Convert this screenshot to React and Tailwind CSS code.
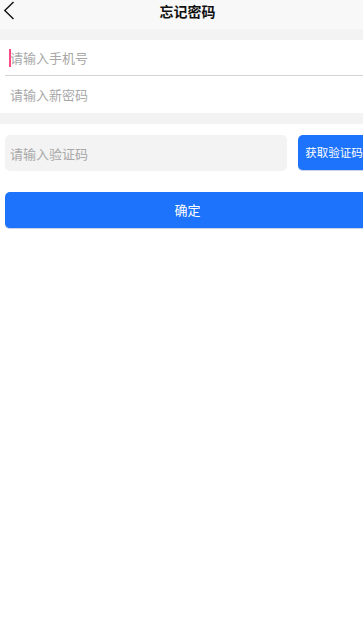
import { useState } from "react";

const App = () => {
    const [phone, setPhone] = useState("");
    const [password, setPassword] = useState("");
    const [code, setCode] = useState("");

    return (
        <div
            className="min-h-screen bg-white overflow-hidden"
            style={{ fontFamily: '"Noto Sans CJK SC", "Noto Sans", sans-serif' }}
        >
            <div className="w-[375px]">
                {/* header */}
                <div className="h-[29px] bg-[#f8f8f8] relative flex justify-center pt-[2px]">
                    <button className="absolute left-[3px] top-[1px] w-[12px] h-[19px]">
                        <svg width="12" height="19" viewBox="0 0 12 19" fill="none">
                            <path d="M10.5 1 L1.8 9.5 L10.5 18" stroke="#111" strokeWidth="1.4" />
                        </svg>
                    </button>
                    <h1 className="text-[14px] font-bold text-[#111] leading-[18px]">忘记密码</h1>
                </div>

                <div className="h-[11px] bg-[#f3f3f3]"></div>

                <div className="bg-white">
                    <div className="h-[36px] ml-[5px] border-b border-[#d4d4d4] relative">
                        <span className="absolute left-[4px] top-[9px] w-[2px] h-[18px] bg-[#ff4a86]"></span>
                        <input
                            value={phone}
                            onChange={(e) => setPhone(e.target.value)}
                            placeholder="请输入手机号"
                            className="w-full h-full px-[5px] text-[13px] outline-none placeholder:text-[#a8a8a8] bg-transparent"
                        />
                    </div>
                    <div className="h-[37px] ml-[5px]">
                        <input
                            type="password"
                            value={password}
                            onChange={(e) => setPassword(e.target.value)}
                            placeholder="请输入新密码"
                            className="w-full h-full px-[5px] text-[13px] outline-none placeholder:text-[#a8a8a8] bg-transparent"
                        />
                    </div>
                </div>

                <div className="h-[11px] bg-[#f3f3f3]"></div>

                <div className="flex items-center gap-[11px] px-[5px] pt-[11px]">
                    <input
                        value={code}
                        onChange={(e) => setCode(e.target.value)}
                        placeholder="请输入验证码"
                        className="w-[282px] h-[36px] rounded-[5px] bg-[#f3f3f3] px-[5px] text-[13px] outline-none placeholder:text-[#a8a8a8]"
                    />
                    <button className="flex-1 h-[36px] rounded-[5px] bg-[#1d73fb] text-white text-[11.5px] whitespace-nowrap border-b border-[#c8d4e8]">
                        获取验证码
                    </button>
                </div>

                <div className="px-[5px] pt-[21px]">
                    <button className="w-full h-[37px] rounded-[5px] bg-[#1d73fb] text-white text-[13px] border-b border-[#c8d4e8]">
                        确定
                    </button>
                </div>
            </div>
        </div>
    );
};

export default App;
